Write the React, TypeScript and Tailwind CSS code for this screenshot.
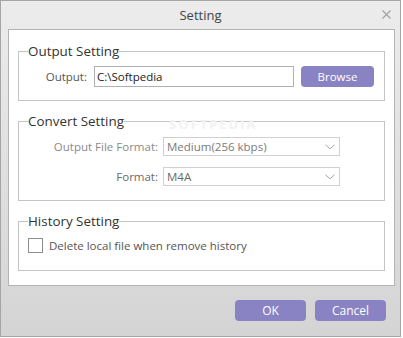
import React from "react";

const font = { fontFamily: '"Open Sans", "Noto Sans", "Liberation Sans", sans-serif' };

function Chevron() {
  return (
    <svg width="10" height="6" viewBox="0 0 10 6" className="shrink-0">
      <path d="M0.5 0.8 L5 4.8 L9.5 0.8" fill="none" stroke="#a8a8a8" strokeWidth="1" />
    </svg>
  );
}

export default function App() {
  return (
    <div className="w-[403px] h-[338px] bg-white" style={font}>
      <div className="w-[401px] h-[337px] border border-[#a5a5a5] bg-gradient-to-b from-[#ececec] to-[#d4d4d4] flex flex-col">
        {/* Title bar */}
        <div className="h-[28px] relative flex items-center justify-center">
          <span className="text-[13px] text-[#444] leading-none">Setting</span>
          <svg className="absolute right-[9px] top-[9px]" width="9" height="9" viewBox="0 0 9 9">
            <path d="M0.5 0.5 L8.5 8.5 M8.5 0.5 L0.5 8.5" stroke="#a0a0a0" strokeWidth="1.1" />
          </svg>
        </div>

        {/* White panel */}
        <div className="ml-[7px] w-[387px] h-[257px] border border-[#b4b4b4] bg-white px-[9px] pt-[12px] flex flex-col gap-[11px]">
          <fieldset className="border border-[#c4c4c4] h-[59px] px-0 pb-0">
            <legend className="ml-[9px] text-[13.4px] leading-[18px] text-[#333] px-0">Output Setting</legend>
            <div className="flex items-center pt-[6px]">
              <span className="w-[68px] text-right text-[11.5px] text-[#555]">Output:</span>
              <div className="ml-[7px] w-[200px] h-[21px] border border-[#b0b0b0] flex items-center px-[2px] text-[11.5px] text-[#222]">
                C:\Softpedia
              </div>
              <button className="ml-[7px] w-[73px] h-[21px] rounded-[4px] bg-[#8983c3] text-white text-[11.5px] leading-none">
                Browse
              </button>
            </div>
          </fieldset>

          <fieldset className="border border-[#c4c4c4] h-[89px] px-0 pb-0 relative">
            <legend className="ml-[9px] text-[13.4px] leading-[18px] text-[#333] px-0">Convert Setting</legend>
            <div className="absolute left-[150px] top-[-12px] text-[13px] leading-[13px] font-bold tracking-[2px] text-[#f2f2f2] pointer-events-none select-none">
              SOFTPEDIA
            </div>
            <div className="flex flex-col gap-[11px] pt-[7px]">
              <div className="flex items-center">
                <span className="w-[139px] text-right text-[11.5px] text-[#8a8a8a]">Output File Format:</span>
                <div className="ml-[5px] w-[177px] h-[19px] border border-[#d0d0d0] flex items-center justify-between pl-[3px] pr-[4px] text-[11.5px] text-[#7a7a7a]">
                  <span>Medium(256 kbps)</span>
                  <Chevron />
                </div>
              </div>
              <div className="flex items-center">
                <span className="w-[139px] text-right text-[11.5px] text-[#6a6a6a]">Format:</span>
                <div className="ml-[5px] w-[177px] h-[19px] border border-[#d0d0d0] flex items-center justify-between pl-[3px] pr-[4px] text-[11.5px] text-[#6a6a6a]">
                  <span>M4A</span>
                  <Chevron />
                </div>
              </div>
            </div>
          </fieldset>

          <fieldset className="border border-[#c4c4c4] h-[59px] px-0 pb-0">
            <legend className="ml-[9px] text-[13.4px] leading-[18px] text-[#333] px-0">History Setting</legend>
            <div className="flex items-center pt-[7px] pl-[9px]">
              <div className="w-[15px] h-[15px] border border-[#8c8c8c] bg-white" />
              <span className="ml-[6px] text-[11.5px] text-[#555]">Delete local file when remove history</span>
            </div>
          </fieldset>
        </div>

        {/* Buttons */}
        <div className="flex justify-end gap-[9px] pr-[14px] pt-[14px]">
          <button className="w-[71px] h-[21px] rounded-[4px] bg-[#8983c3] text-white text-[12px] leading-none">OK</button>
          <button className="w-[71px] h-[21px] rounded-[4px] bg-[#8983c3] text-white text-[12px] leading-none">Cancel</button>
        </div>
      </div>
    </div>
  );
}
